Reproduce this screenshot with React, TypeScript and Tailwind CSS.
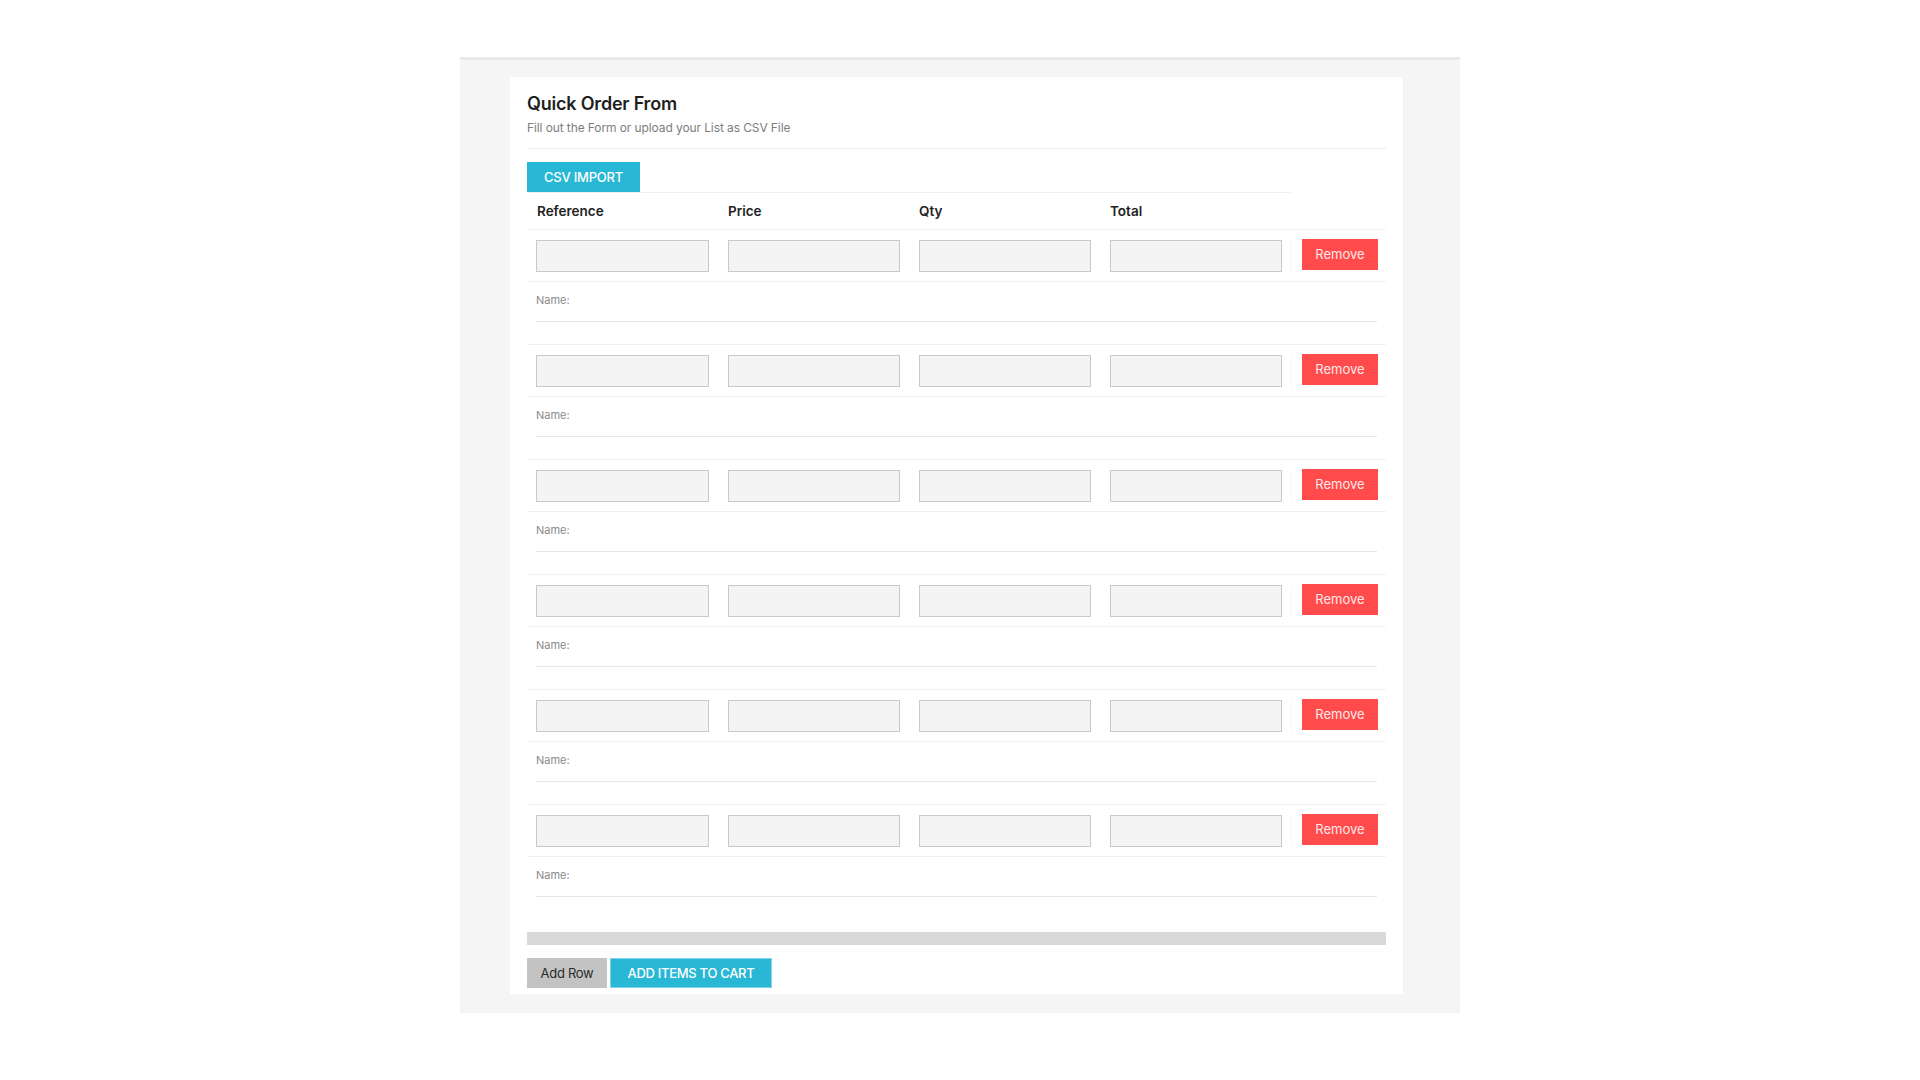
import React from "react";

const font = { fontFamily: "Inter, 'Noto Sans', 'Liberation Sans', sans-serif" };

function Row({ last }: { last?: boolean }) {
  return (
    <div>
      <div className="grid grid-cols-[191px_191px_191px_191px_96px] border-t border-b border-[#f1f1f1] pt-[10px] pb-[9px]">
        {[0, 1, 2, 3].map((i) => (
          <div key={i} className={i === 0 ? "pl-[9px] pr-[9px]" : "pl-[10px] pr-[9px]"}>
            <input
              type="text"
              className="block w-full h-[32px] bg-[#f4f4f4] border border-[#c9c9c9] outline-none"
            />
          </div>
        ))}
        <div className="pl-[10px] pr-[10px] border-l border-[#f6f6f6]">
          <button className="w-[76px] h-[31px] -mt-[1px] bg-[#ff4b4b] text-[#ffe9e9] text-[13px] leading-none">
            Remove
          </button>
        </div>
      </div>
      <div className={last ? "mb-[35px]" : "mb-[22px]"}>
        <div className="mx-[9px] pt-[10px] pb-[13px] border-b border-[#e6e6e6] text-[11px] leading-[16px] text-[#8a8a8a]">
          Name:
        </div>
      </div>
    </div>
  );
}

export default function App() {
  return (
    <div className="min-h-[1080px] bg-white" style={font}>
      <div className="pt-[57px]">
        <div className="mx-auto w-[1000px] bg-[#f5f5f5] border-t-[3px] border-[#e9e9e9] pl-[50px] pr-[57px] pt-[17px] pb-[19px]">
          <div className="bg-white px-[17px] pt-[15px] pb-[6px]">
            <div className="text-[18px] leading-[24px] font-semibold text-[#1f1f1f] tracking-[-0.2px]">
              Quick Order From
            </div>
            <div className="mt-[3px] text-[12px] leading-[18px] text-[#7d7d7d] tracking-[-0.1px]">
              Fill out the Form or upload your List as CSV File
            </div>
            <div className="mt-[11px] border-t border-[#ebebeb]" />
            <button className="mt-[13px] w-[113px] h-[30px] bg-[#29b7d6] text-white text-[13px] font-medium leading-none tracking-[-0.2px]">
              CSV IMPORT
            </button>
            <div className="w-[764px] h-[37px] border-t border-[#f1f1f1] grid grid-cols-[191px_191px_191px_191px] items-center">
              {["Reference", "Price", "Qty", "Total"].map((h) => (
                <div key={h} className="pl-[10px] text-[13.5px] font-semibold text-[#222]">
                  {h}
                </div>
              ))}
            </div>
            {[0, 1, 2, 3, 4, 5].map((i) => (
              <Row key={i} last={i === 5} />
            ))}
            <div className="h-[13px] bg-[#d9d9d9]" />
            <div className="mt-[13px] flex gap-[3px]">
              <button className="w-[80px] h-[30px] bg-[#c3c3c3] text-[#2b2b2b] text-[13px] leading-none tracking-[-0.3px]">
                Add Row
              </button>
              <button className="w-[162px] h-[30px] bg-[#29b7d6] border border-[#7fd6ea] text-white text-[13px] font-medium leading-none tracking-[-0.3px]">
                ADD ITEMS TO CART
              </button>
            </div>
          </div>
        </div>
      </div>
    </div>
  );
}
